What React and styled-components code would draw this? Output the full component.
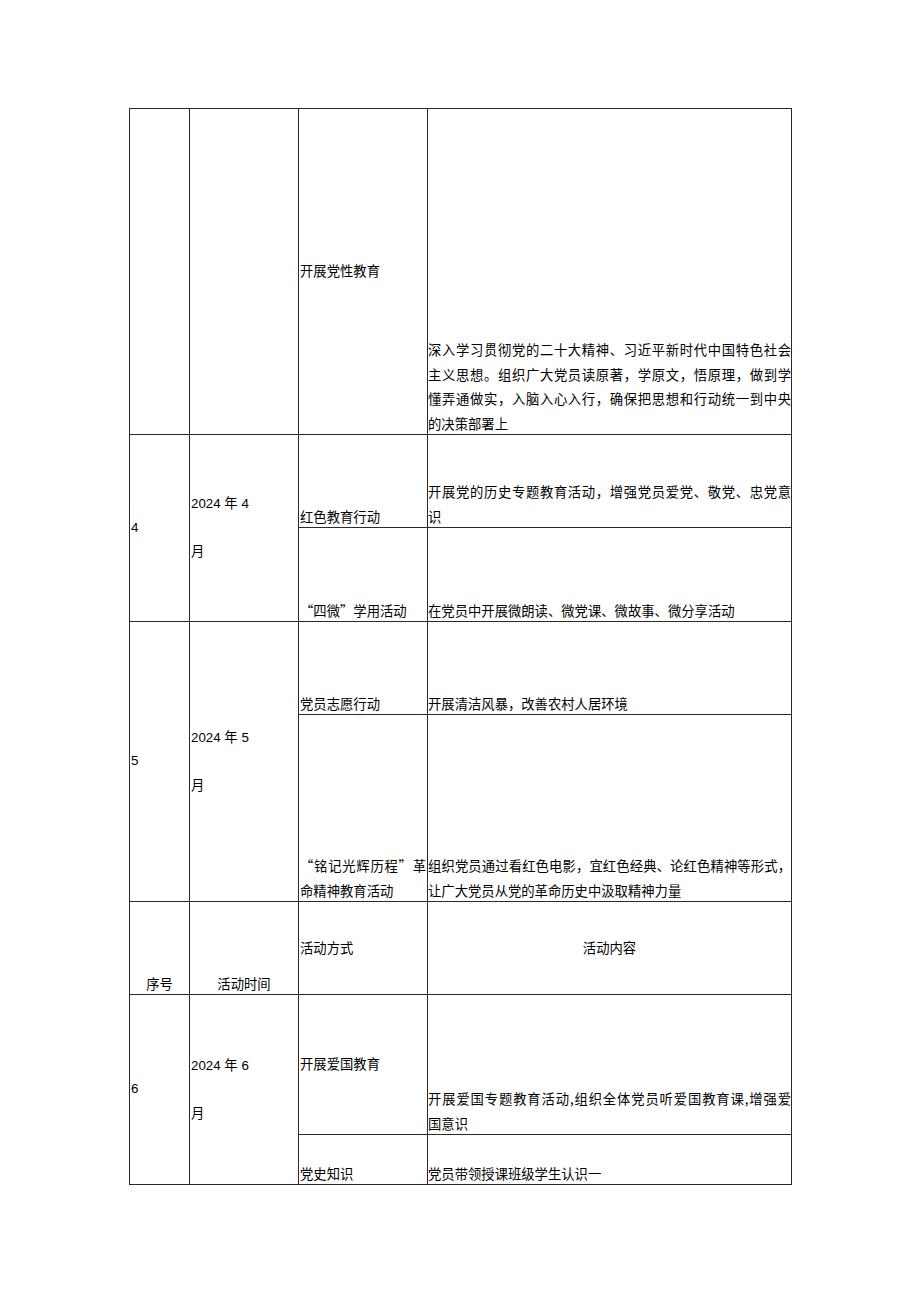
import React from 'react';
import styled, { createGlobalStyle } from 'styled-components';

const Global = createGlobalStyle`
  html, body { margin: 0; padding: 0; background: #ffffff; }
  body {
    font-family: "Noto Sans CJK SC", "Noto Sans", sans-serif;
    color: #000000;
  }
`;

const Page = styled.main`
  width: 920px;
  min-height: 1301px;
  box-sizing: border-box;
  padding: 108px 0 0 129px;
`;

const Table = styled.div`
  display: grid;
  grid-template-columns: 59px 108px 128px 363px;
  grid-template-rows: 325px 92px 93px 92px 186px 92px 139px 49px;
  gap: 1px;
  padding: 1px;
  background: #2b2b2b;
  width: max-content;
`;

const Cell = styled.div`
  grid-column: ${p => p.$col};
  grid-row: ${p => p.$row} / span ${p => p.$span || 1};
  background: #ffffff;
  display: flex;
  flex-direction: column;
  justify-content: ${p => (p.$v === 'middle' ? 'center' : 'flex-end')};
  align-items: ${p => (p.$center ? 'center' : 'stretch')};
  padding: 0 ${p => (p.$wide ? '0' : '1px')};
  font-size: 13.33px;
  line-height: 24.5px;
  overflow: visible;
`;

const Block = styled.div`
  margin-bottom: ${p => (p.$bottom ? '-2px' : '0')};
`;

const Line = styled.span`
  display: block;
  white-space: nowrap;
  text-align: ${p => (p.$fill ? 'justify' : 'left')};
  text-align-last: ${p => (p.$fill ? 'justify' : 'auto')};
  ${p => p.$fill && 'white-space: normal;'}
`;

const Num = styled.div`
  font-family: "Liberation Sans", "Noto Sans CJK SC", sans-serif;
  font-size: 13.33px;
`;

const DateBlock = styled.div`
  font-family: "Liberation Sans", "Noto Sans CJK SC", sans-serif;
  font-size: 13.33px;
  line-height: 48px;
`;

const Lines = ({ lines, bottom = true }) => (
  <Block $bottom={bottom}>
    {lines.map((l, i) => (
      <Line key={i} $fill={i < lines.length - 1}>{l}</Line>
    ))}
  </Block>
);

const DateCell = ({ row, span, month }) => (
  <Cell $col={2} $row={row} $span={span} $v="middle">
    <DateBlock>
      <div>{`2024 年 ${month}`}</div>
      <div>月</div>
    </DateBlock>
  </Cell>
);

const NumCell = ({ row, span, n }) => (
  <Cell $col={1} $row={row} $span={span} $v="middle">
    <Num>{n}</Num>
  </Cell>
);

export default function App() {
  return (
    <Page lang="zh-CN">
      <Global />
      <Table>
        {/* Block 1 */}
        <Cell $col={1} $row={1} />
        <Cell $col={2} $row={1} />
        <Cell $col={3} $row={1} $v="middle">
          <Block>开展党性教育</Block>
        </Cell>
        <Cell $col={4} $row={1} $wide>
          <Lines
            lines={[
              '深入学习贯彻党的二十大精神、习近平新时代中国特色社会',
              '主义思想。组织广大党员读原著，学原文，悟原理，做到学',
              '懂弄通做实，入脑入心入行，确保把思想和行动统一到中央',
              '的决策部署上',
            ]}
          />
        </Cell>

        {/* Block 4 */}
        <NumCell row={2} span={2} n="4" />
        <DateCell row={2} span={2} month="4" />
        <Cell $col={3} $row={2}>
          <Lines lines={['红色教育行动']} />
        </Cell>
        <Cell $col={4} $row={2} $wide>
          <Lines lines={['开展党的历史专题教育活动，增强党员爱党、敬党、忠党意', '识']} />
        </Cell>
        <Cell $col={3} $row={3}>
          <Lines lines={['“四微”学用活动']} />
        </Cell>
        <Cell $col={4} $row={3} $wide>
          <Lines lines={['在党员中开展微朗读、微党课、微故事、微分享活动']} />
        </Cell>

        {/* Block 5 */}
        <NumCell row={4} span={2} n="5" />
        <DateCell row={4} span={2} month="5" />
        <Cell $col={3} $row={4}>
          <Lines lines={['党员志愿行动']} />
        </Cell>
        <Cell $col={4} $row={4} $wide>
          <Lines lines={['开展清洁风暴，改善农村人居环境']} />
        </Cell>
        <Cell $col={3} $row={5}>
          <Lines lines={['“铭记光辉历程”革', '命精神教育活动']} />
        </Cell>
        <Cell $col={4} $row={5} $wide>
          <Lines
            lines={[
              '组织党员通过看红色电影，宜红色经典、论红色精神等形式，',
              '让广大党员从党的革命历史中汲取精神力量',
            ]}
          />
        </Cell>

        {/* Header */}
        <Cell $col={1} $row={6} $center>
          <Block $bottom>序号</Block>
        </Cell>
        <Cell $col={2} $row={6} $center>
          <Block $bottom>活动时间</Block>
        </Cell>
        <Cell $col={3} $row={6} $v="middle">
          <Block>活动方式</Block>
        </Cell>
        <Cell $col={4} $row={6} $v="middle" $center $wide>
          <Block>活动内容</Block>
        </Cell>

        {/* Block 6 */}
        <NumCell row={7} span={2} n="6" />
        <DateCell row={7} span={2} month="6" />
        <Cell $col={3} $row={7} $v="middle">
          <Block>开展爱国教育</Block>
        </Cell>
        <Cell $col={4} $row={7} $wide>
          <Lines lines={['开展爱国专题教育活动,组织全体党员听爱国教育课,增强爱', '国意识']} />
        </Cell>
        <Cell $col={3} $row={8}>
          <Lines lines={['党史知识']} />
        </Cell>
        <Cell $col={4} $row={8} $wide>
          <Lines lines={['党员带领授课班级学生认识一']} />
        </Cell>
      </Table>
    </Page>
  );
}
